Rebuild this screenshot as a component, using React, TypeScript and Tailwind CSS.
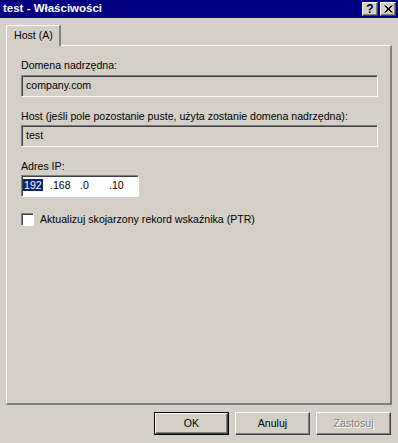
import React from 'react';

const font = "font-['Liberation_Sans',Arial,sans-serif]";

const Raised = ({ children, className = '' }: { children?: React.ReactNode; className?: string }) => (
  <div
    className={`border border-t-white border-l-white border-b-[#404040] border-r-[#404040] shadow-[inset_-1px_-1px_0_#808080] bg-[#d4d0c8] flex items-center justify-center ${className}`}
  >
    {children}
  </div>
);

const Field = ({ children, className = '' }: { children?: React.ReactNode; className?: string }) => (
  <div
    className={`border border-t-[#808080] border-l-[#808080] border-b-white border-r-white shadow-[inset_1px_1px_0_#404040] flex items-center ${className}`}
  >
    {children}
  </div>
);

const App = () => {
  return (
    <div className={`w-[398px] h-[443px] bg-[#d4d0c8] text-[10.6px] text-black ${font} flex flex-col overflow-hidden`}>
      {/* Title bar */}
      <div className="h-[18px] bg-[#000080] flex items-center justify-between pl-[3px] pr-[2px]">
        <span className="text-white font-bold text-[11.5px]">test - Właściwości</span>
        <div className="flex gap-[2px]">
          <Raised className="w-[16px] h-[14px] text-[12px] font-bold leading-none">?</Raised>
          <Raised className="w-[16px] h-[14px]">
            <svg width="9" height="8" viewBox="0 0 9 8">
              <path d="M0.5 0.5L7.5 7.5M1.5 0.5L8.5 7.5M7.5 0.5L0.5 7.5M8.5 0.5L1.5 7.5" stroke="black" strokeWidth="1" />
            </svg>
          </Raised>
        </div>
      </div>

      {/* Tabs */}
      <div className="mt-[7px] px-[6px] flex flex-col">
        <div className="flex">
          <div className="relative h-[21px] w-[55px] border-t border-l border-white border-r-2 border-r-[#808080] rounded-tl-[2px] flex items-center pl-[7px] -mb-[1px] bg-[#d4d0c8] z-10">
            Host (A)
          </div>
        </div>
        <div className="h-[360px] border-t border-l border-white border-r-2 border-b-2 border-r-[#808080] border-b-[#808080] pt-[13px] px-[14px] flex flex-col">
          <div className="leading-[13px] mb-[3px]">Domena nadrzędna:</div>
          <Field className="w-[357px] h-[22px] pl-[4px]">company.com</Field>

          <div className="leading-[13px] mt-[13px] mb-[2px]">
            Host (jeśli pole pozostanie puste, użyta zostanie domena nadrzędna):
          </div>
          <Field className="w-[357px] h-[22px] pl-[4px]">test</Field>

          <div className="leading-[13px] mt-[13px] mb-[2px]">Adres IP:</div>
          <Field className="w-[118px] h-[22px] bg-white pl-[1px]">
            <span className="w-[27px]">
              <span className="bg-[#0a246a] text-white px-[1px]">192</span>
            </span>
            <span className="w-[30px]">.168</span>
            <span className="w-[29px]">.0</span>
            <span>.10</span>
          </Field>

          <div className="flex items-center mt-[15px] gap-[6px]">
            <Field className="w-[13px] h-[13px] bg-white" />
            <span>Aktualizuj skojarzony rekord wskaźnika (PTR)</span>
          </div>
        </div>

        {/* Buttons */}
        <div className="flex justify-end gap-[6px] mt-[7px] pr-[1px]">
          <div className="border border-black">
            <Raised className="w-[73px] h-[21px]">OK</Raised>
          </div>
          <Raised className="w-[75px] h-[23px]">Anuluj</Raised>
          <Raised className="w-[75px] h-[23px] text-[#808080] [text-shadow:1px_1px_0_white]">Zastosuj</Raised>
        </div>
      </div>
    </div>
  );
};

export default App;
